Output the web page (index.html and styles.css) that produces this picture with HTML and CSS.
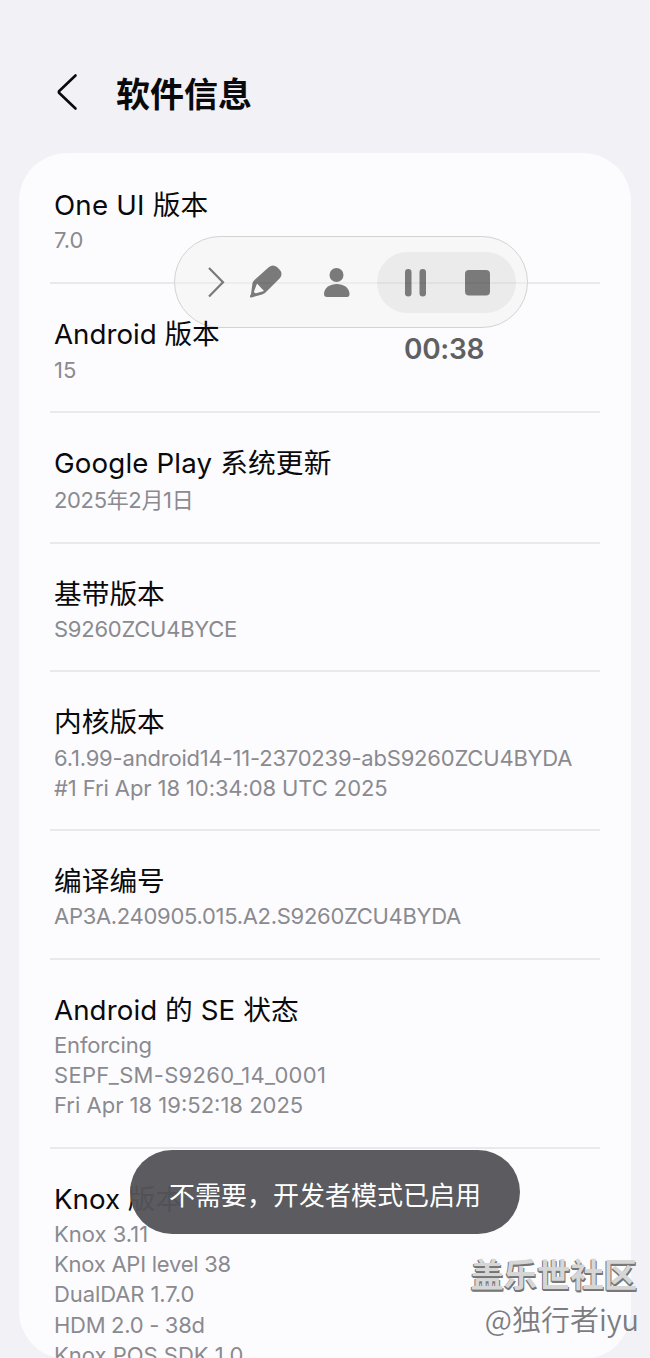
FILE: index.html
```html
<!DOCTYPE html>
<html lang="zh-CN">
<head>
    <meta charset="UTF-8">
    <meta name="viewport" content="width=device-width, initial-scale=1.0">
    <title>软件信息</title>
    <link rel="stylesheet" href="styles.css">
</head>
<body>
    <div class="screen">
        <header class="top-bar">
            <svg class="back" width="24" height="40" viewBox="0 0 24 40">
                <path d="M20.500 3.500 L4 19.200 Q3.500 20 4 20.800 L20.500 36.500"/>
            </svg>
            <h1>软件信息</h1>
        </header>

        <div class="card">
            <div class="item first">
                <h2 class="one-ui">One UI 版本</h2>
                <p>7.0</p>
            </div>
            <div class="item">
                <h2 class="android">Android 版本</h2>
                <p>15</p>
            </div>
            <div class="item update">
                <h2 class="play">Google Play 系统更新</h2>
                <p class="date">2025年2月1日</p>
            </div>
            <div class="item">
                <h2>基带版本</h2>
                <p class="baseband">S9260ZCU4BYCE</p>
            </div>
            <div class="item">
                <h2>内核版本</h2>
                <p class="kernel">6.1.99-android14-11-2370239-abS9260ZCU4BYDA</p>
                <p class="kernel-date">#1 Fri Apr 18 10:34:08 UTC 2025</p>
            </div>
            <div class="item">
                <h2>编译编号</h2>
                <p class="build">AP3A.240905.015.A2.S9260ZCU4BYDA</p>
            </div>
            <div class="item">
                <h2 class="se">Android 的 SE 状态</h2>
                <p class="enforcing">Enforcing</p>
                <p class="sepf">SEPF_SM-S9260_14_0001</p>
                <p>Fri Apr 18 19:52:18 2025</p>
            </div>
            <div class="item">
                <h2>Knox 版本</h2>
                <p>Knox 3.11</p>
                <p class="api">Knox API level 38</p>
                <p class="dualdar">DualDAR 1.7.0</p>
                <p class="hdm">HDM 2.0 - 38d</p>
                <p>Knox POS SDK 1.0</p>
            </div>
        </div>

        <div class="recorder">
            <svg width="351" height="90" viewBox="0 0 351 90">
                <rect class="controls" x="202" y="15" width="139" height="61" rx="30.500"/>
                <path class="arrow" d="M34 31 L48 45.300 L34 59.500"/>
                <g class="glyph">
                    <path fill-rule="evenodd" d="M76 57 L77.500 46 Q78 44 80 42.500 L94 30 Q98 27 102 30 L105 33 Q108 37 105 41 L91 55 Q89.500 56.700 87 57.500 L78 60 Q74.500 61.500 75 59 Z M82 46.500 L79 54.500 Q79 56.500 81 56.300 L89 54 Z"/>
                    <circle cx="161.500" cy="38" r="7"/>
                    <path d="M149 57 C149 43.500 174.500 43.500 174.500 57 Q174.500 60 172 60 L152 60 Q149 60 149 57 Z"/>
                    <rect x="230" y="32" width="6.500" height="27.500" rx="3.250"/>
                    <rect x="244.500" y="32" width="6.500" height="27.500" rx="3.250"/>
                    <rect x="290" y="33" width="25" height="25.500" rx="4"/>
                </g>
                <path class="rule" d="M0 46 H351"/>
            </svg>
        </div>
        <div class="timer">00:38</div>

        <div class="toast">不需要，开发者模式已启用</div>

        <div class="watermark">
            <div class="community">盖乐世社区</div>
            <div class="user">@独行者iyu</div>
        </div>
    </div>
</body>
</html>
```
FILE: styles.css
```css
* {
    box-sizing: border-box;
}
body {
    margin: 0;
    background: #f1f1f6;
    font-family: Inter, "Noto Sans CJK SC", sans-serif;
    color: #0a0a0c;
}
h1, h2, p {
    margin: 0;
    font-weight: 400;
    white-space: nowrap;
}
.screen {
    position: relative;
    height: 1358px;
    overflow: hidden;
}
.top-bar {
    display: flex;
    align-items: center;
    height: 153px;
    padding: 31px 0 0 55px;
}
.back {
    fill: none;
    stroke: #0a0a0c;
    stroke-width: 2.6;
    stroke-linecap: round;
    stroke-linejoin: round;
}
.top-bar h1 {
    margin-left: 37px;
    padding-top: 1px;
    font-size: 34px;
    font-weight: 600;
}
.card {
    height: 1206px;
    margin: 0 19px;
    padding: 0 31px;
    background: #fcfcff;
    border-radius: 48px;
    overflow: hidden;
}
.item {
    padding: 31px 4px 26px;
    border-bottom: 2px solid #e8e8ed;
}
.item.first {
    padding-top: 33px;
    padding-bottom: 27px;
}
.item h2 {
    margin-bottom: 1.15px;
    font-size: 27.7px;
    font-weight: 380;
    line-height: 38px;
}
.item p {
    color: #8a8a8f;
    font-size: 22px;
    font-weight: 370;
    line-height: 30.3px;
}
.item.update p {
    padding-top: 2px;
    line-height: 31px;
}
.item .one-ui {
    letter-spacing: 0.2px;
}
/* keeps the title above the floating recorder */
.item .android {
    position: relative;
    z-index: 2;
}
.item .play {
    letter-spacing: 0.15px;
}
.item .se {
    letter-spacing: 0.08px;
}
.item .date {
    letter-spacing: -0.35px;
}
.item .baseband {
    letter-spacing: -0.25px;
}
.item .kernel {
    letter-spacing: -0.2px;
}
.item .kernel-date {
    letter-spacing: -0.1px;
}
.item .build {
    letter-spacing: -0.3px;
}
.item .enforcing {
    letter-spacing: -0.15px;
}
.item .sepf {
    letter-spacing: 0.3px;
}
.item .api {
    letter-spacing: -0.25px;
}
.item .dualdar {
    letter-spacing: -0.1px;
}
.item .hdm {
    letter-spacing: -0.3px;
}
.recorder {
    position: absolute;
    top: 236px;
    left: 174px;
    z-index: 1;
    width: 354px;
    height: 92px;
    background: #f7f7f8;
    border: 1.5px solid #d3d3d3;
    border-radius: 46px;
}
.recorder svg {
    display: block;
}
.controls {
    fill: #ebebeb;
}
.arrow {
    fill: none;
    stroke: #7a7a7a;
    stroke-width: 2.2;
}
.glyph {
    fill: #7a7a7a;
}
.rule {
    stroke: #000;
    stroke-opacity: 0.04;
    stroke-width: 2;
}
.timer {
    position: absolute;
    top: 332px;
    left: 404px;
    color: #606062;
    font-size: 28px;
    font-weight: 560;
    letter-spacing: -0.3px;
    line-height: 34px;
}
.toast {
    position: absolute;
    top: 1150px;
    left: 130px;
    width: 390px;
    height: 84px;
    border-radius: 42px;
    background: rgba(84, 84, 89, 0.96);
    color: #fff;
    font-size: 26px;
    font-weight: 380;
    line-height: 91px;
    text-align: center;
    white-space: nowrap;
}
.watermark {
    position: absolute;
    top: 1253px;
    right: 13px;
    text-align: right;
    white-space: nowrap;
}
.community {
    color: #d6d6d6;
    font-size: 33.3px;
    font-weight: 600;
    line-height: 44px;
    text-shadow: -1px 1px 0 #7a7a7a, 0 2px 0 #747474, 1px 2px 0 #747474;
}
.user {
    margin-right: -2px;
    color: #7c7c80;
    font-family: "Noto Sans CJK SC", sans-serif;
    font-size: 29px;
    font-weight: 350;
    line-height: 43px;
}
```
